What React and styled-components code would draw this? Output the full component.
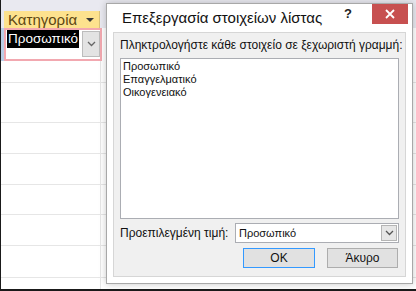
import React from 'react';
import styled, { createGlobalStyle } from 'styled-components';

const GlobalStyle = createGlobalStyle`
  html, body {
    margin: 0;
    padding: 0;
    background: #fff;
    font-family: "Liberation Sans", Arial, sans-serif;
  }
`;

const Screen = styled.div`
  position: relative;
  width: 416px;
  height: 291px;
  box-sizing: border-box;
  border-left: 1px solid #1a1a1a;
  border-bottom: 2px solid #1a1a1a;
  overflow: hidden;
  background: #fff;
`;

const TopBand = styled.div`
  height: 11px;
  background: #e9e9f0;
`;

const HeaderRow = styled.div`
  display: flex;
  height: 17px;
  background: #e9e9f0;
`;

const Selector = styled.div`
  width: 3px;
  background: ${(p) => p.$bg || '#e9e9f0'};
`;

const HeaderCell = styled.div`
  width: 96px;
  display: flex;
  align-items: center;
  justify-content: space-between;
  padding: 0 5px 0 4px;
  box-sizing: border-box;
  background: #fde28e;
  border-right: 1px solid #d9c27a;
  color: #5e4712;
  font-size: 15px;
  line-height: 17px;
`;

const SelectedRow = styled.div`
  display: flex;
  height: 33px;
`;

const SelectedCell = styled.div`
  width: 98px;
  box-sizing: border-box;
  border: 2px solid #f2a8b0;
  display: flex;
  justify-content: space-between;
  padding: 0 0 0 1px;
`;

const Highlight = styled.span`
  align-self: flex-start;
  background: #000;
  color: #fff;
  font-size: 13.5px;
  line-height: 18px;
  padding: 0 1px;
`;

const ComboButton = styled.div`
  width: 18px;
  height: 26px;
  margin-top: 1px;
  box-sizing: border-box;
  background: #e3e3e3;
  border: 1px solid #bcbcbc;
  display: flex;
  align-items: center;
  justify-content: center;
`;

const GridRow = styled.div`
  display: flex;
  height: ${(p) => p.$h}px;
  box-sizing: border-box;
  border-bottom: 1px solid #e6e6e6;
`;

const GridCell = styled.div`
  width: 96px;
  border-right: 1px solid #e6e6e6;
`;

const Dialog = styled.div`
  position: absolute;
  left: 105px;
  top: 3px;
  width: 307px;
  height: 281px;
  box-sizing: border-box;
  background: #fff;
  border: 1px solid #a8a8a8;
  box-shadow: 0 0 7px rgba(0, 0, 0, 0.22);
  display: flex;
  flex-direction: column;
`;

const TitleBar = styled.div`
  display: flex;
  align-items: flex-start;
  height: 28px;
  padding: 0 4px 0 15px;
`;

const Title = styled.div`
  flex: 1;
  margin-top: 4px;
  font-size: 15px;
  line-height: 20px;
  color: #111;
`;

const Help = styled.div`
  margin: 3px 20px 0 0;
  font-size: 13px;
  font-weight: bold;
  line-height: 14px;
  color: #222;
`;

const Close = styled.div`
  width: 36px;
  height: 20px;
  background: #c75050;
  display: flex;
  align-items: center;
  justify-content: center;
`;

const Panel = styled.div`
  flex: 1;
  margin: 0 6px 6px 6px;
  background: #f0f0f0;
  border: 1px solid #d6d6d6;
  padding: 4px 6px 8px 6px;
  display: flex;
  flex-direction: column;
  font-size: 12px;
  color: #111;
`;

const Label = styled.div`
  line-height: 16px;
  white-space: nowrap;
`;

const ListBox = styled.div`
  margin-top: 5px;
  height: 161px;
  box-sizing: border-box;
  background: #fff;
  border: 1px solid #abadb3;
  padding: 1px 2px;
  font-size: 11px;
  line-height: 13px;
`;

const DefaultRow = styled.div`
  display: flex;
  align-items: center;
  justify-content: space-between;
  margin-top: 4px;
  height: 20px;
`;

const Select = styled.div`
  width: 164px;
  height: 20px;
  box-sizing: border-box;
  background: #fff;
  border: 1px solid #abadb3;
  display: flex;
  align-items: center;
  justify-content: space-between;
  padding-left: 3px;
  font-size: 11px;
`;

const SelectArrow = styled.div`
  width: 16px;
  height: 16px;
  margin-right: 1px;
  box-sizing: border-box;
  background: #e6e6e6;
  border: 1px solid #b5b5b5;
  display: flex;
  align-items: center;
  justify-content: center;
`;

const Buttons = styled.div`
  display: flex;
  justify-content: flex-end;
  gap: 12px;
  margin-top: 5px;
  padding-right: 1px;
`;

const Button = styled.div`
  width: ${(p) => p.$w}px;
  height: 20px;
  box-sizing: border-box;
  background: #e1e1e1;
  border: 1px solid ${(p) => (p.$primary ? '#3399ff' : '#adadad')};
  display: flex;
  align-items: center;
  justify-content: center;
  font-size: 12px;
  color: #111;
`;

const Chevron = ({ color = '#555' }) => (
  <svg width="9" height="6" viewBox="0 0 9 6">
    <path d="M1 1 L4.5 4.5 L8 1" fill="none" stroke={color} strokeWidth="1.3" />
  </svg>
);

const gridHeights = [22, 40, 31, 31, 30, 31, 32, 20];
const items = ['Προσωπικό', 'Επαγγελματικό', 'Οικογενειακό'];

export default function App() {
  return (
    <>
      <GlobalStyle />
      <Screen>
        <TopBand />
        <HeaderRow>
          <Selector />
          <HeaderCell>
            <span>Κατηγορία</span>
            <svg width="8" height="6" viewBox="0 0 8 6">
              <path d="M0 1 L8 1 L4 5 Z" fill="#3a3a3a" />
            </svg>
          </HeaderCell>
        </HeaderRow>
        <SelectedRow>
          <Selector $bg="#b9cde6" />
          <SelectedCell>
            <Highlight>Προσωπικό</Highlight>
            <ComboButton>
              <Chevron color="#666" />
            </ComboButton>
          </SelectedCell>
        </SelectedRow>
        {gridHeights.map((h, i) => (
          <GridRow key={i} $h={h}>
            <Selector $bg="#fff" />
            <GridCell />
          </GridRow>
        ))}

        <Dialog>
          <TitleBar>
            <Title>Επεξεργασία στοιχείων λίστας</Title>
            <Help>?</Help>
            <Close>
              <svg width="10" height="10" viewBox="0 0 10 10">
                <path d="M1 1 L9 9 M9 1 L1 9" stroke="#fff" strokeWidth="1.8" />
              </svg>
            </Close>
          </TitleBar>
          <Panel>
            <Label>Πληκτρολογήστε κάθε στοιχείο σε ξεχωριστή γραμμή:</Label>
            <ListBox>
              {items.map((t) => (
                <div key={t}>{t}</div>
              ))}
            </ListBox>
            <DefaultRow>
              <Label>Προεπιλεγμένη τιμή:</Label>
              <Select>
                <span>Προσωπικό</span>
                <SelectArrow>
                  <Chevron />
                </SelectArrow>
              </Select>
            </DefaultRow>
            <Buttons>
              <Button $w={72} $primary>OK</Button>
              <Button $w={71}>Άκυρο</Button>
            </Buttons>
          </Panel>
        </Dialog>
      </Screen>
    </>
  );
}
